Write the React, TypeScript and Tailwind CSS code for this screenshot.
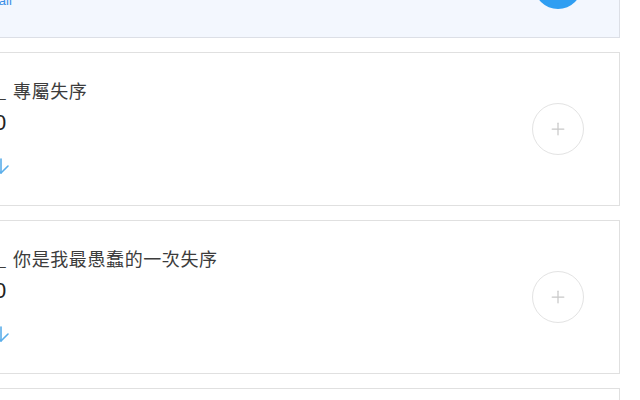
import React from 'react';
import { Plus, ArrowDown } from 'lucide-react';

interface Playlist {
  title: string;
  count: string;
}

const LISTS: Playlist[] = [
  { title: '專屬失序', count: '0' },
  { title: '你是我最愚蠢的一次失序', count: '0' },
  { title: '失序', count: '0' },
];

const cjk = { fontFamily: '"Noto Sans CJK TC", "Noto Sans", sans-serif' };

const PlaylistCard: React.FC<{ item: Playlist }> = ({ item }) => (
  <div className="h-[154px] border border-[#e0e0e0] bg-white flex items-start justify-between pl-[35px] pr-[35px] pt-[25px] shrink-0">
    <div className="flex flex-col">
      <div className="text-[18px] leading-[24px] text-[#3c3c3c] flex" style={cjk}>
        <span>_</span>
        <span className="ml-[7px] tracking-[0.6px]">{item.title}</span>
      </div>
      <div className="mt-[6px] text-[22px] leading-[30px] text-[#222] font-['Liberation_Sans',sans-serif] -ml-[2px]">
        {item.count}
      </div>
      <div className="mt-[16px] -ml-[7px] text-[#5aaeea]">
        <ArrowDown size={24} strokeWidth={1.6} />
      </div>
    </div>
    <button className="self-center -mt-[26px] w-[52px] h-[52px] rounded-full border border-[#e3e3e3] flex items-center justify-center text-[#c8c8c8]">
      <Plus size={20} strokeWidth={1.5} />
    </button>
  </div>
);

export default function App() {
  return (
    <div className="w-[640px] h-[400px] overflow-hidden bg-white">
      <div className="-ml-[40px] mr-[20px] -mt-[82px] flex flex-col gap-[14px]">
        {/* header card */}
        <div className="h-[120px] border border-[#dcdfe6] bg-[#f3f7fe] flex items-end justify-between pl-[26px] pr-[37px] pb-[27px] shrink-0">
          <div className="text-[13px] leading-[18px] text-[#3a8ee6] font-['Liberation_Sans',sans-serif]">
            Wall
          </div>
          <div className="w-[48px] h-[48px] rounded-full bg-[#2f9ef2] mb-[1px]" />
        </div>
        {LISTS.map((item, i) => (
          <PlaylistCard key={i} item={item} />
        ))}
      </div>
    </div>
  );
}
